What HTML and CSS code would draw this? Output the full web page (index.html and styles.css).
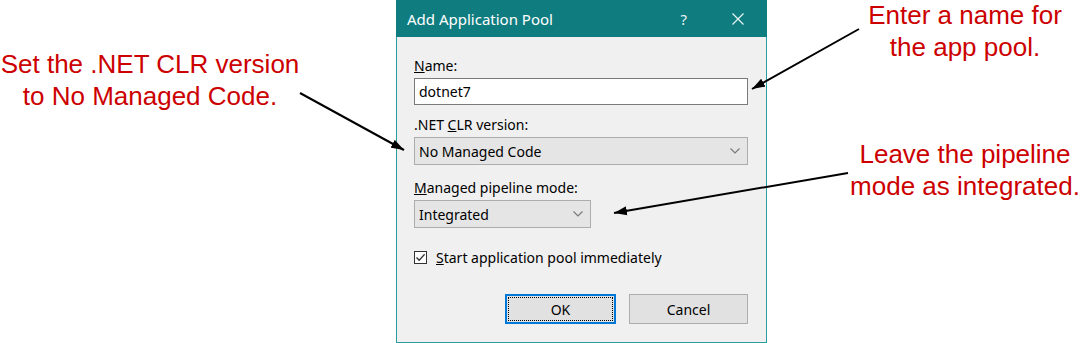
FILE: index.html
```html
<!DOCTYPE html>
<html lang="en">
<head>
  <meta charset="UTF-8">
  <title>Add Application Pool</title>
  <link rel="stylesheet" href="styles.css">
</head>
<body>
  <div class="page">
    <!-- 左側の注釈 -->
    <div class="side side-left">
      <p class="note note-clr">Set the .NET CLR version<br>to No Managed Code.</p>
    </div>

    <!-- ダイアログ本体 -->
    <div class="dialog">
      <div class="titlebar">
        <span class="title">Add Application Pool</span>
        <span class="help">?</span>
        <svg class="close" width="12" height="12" viewBox="0 0 12 12">
          <path d="M0.5 0.5 L11.5 11.5 M11.5 0.5 L0.5 11.5" stroke="#e8f4f4" stroke-width="1.2" fill="none"/>
        </svg>
      </div>
      <div class="content">
        <div class="label"><u>N</u>ame:</div>
        <div class="textbox">dotnet7</div>

        <div class="label">.NET <u>C</u>LR version:</div>
        <div class="select select-wide">
          <span>No Managed Code</span>
          <svg class="chevron" width="10" height="6" viewBox="0 0 10 6"><path d="M0.5 0.5 L5 5 L9.5 0.5" stroke="#7a7a7a" stroke-width="1.2" fill="none"/></svg>
        </div>

        <div class="label"><u>M</u>anaged pipeline mode:</div>
        <div class="select select-narrow">
          <span>Integrated</span>
          <svg class="chevron" width="10" height="6" viewBox="0 0 10 6"><path d="M0.5 0.5 L5 5 L9.5 0.5" stroke="#7a7a7a" stroke-width="1.2" fill="none"/></svg>
        </div>

        <div class="check">
          <span class="checkbox">
            <svg width="11" height="11" viewBox="0 0 11 11"><path d="M1.5 5.5 L4.2 8.3 L9.6 2.3" stroke="#333" stroke-width="1.3" fill="none"/></svg>
          </span>
          <span><u>S</u>tart application pool immediately</span>
        </div>

        <div class="buttons">
          <div class="btn btn-default"><span class="focus">OK</span></div>
          <div class="btn">Cancel</div>
        </div>
      </div>
    </div>

    <!-- 右側の注釈 -->
    <div class="side side-right">
      <p class="note note-name">Enter a name for<br>the app pool.</p>
      <p class="note note-mode">Leave the pipeline<br>mode as integrated.</p>
    </div>

    <!-- 矢印 -->
    <svg class="arrows" width="1083" height="343" viewBox="0 0 1083 343">
      <defs>
        <marker id="head" markerUnits="userSpaceOnUse" markerWidth="14" markerHeight="10" refX="13" refY="5" orient="auto">
          <path d="M0 0.5 L13 5 L0 9.5 Z" fill="#000"/>
        </marker>
      </defs>
      <line x1="859" y1="29" x2="752" y2="89" stroke="#000" stroke-width="2" marker-end="url(#head)"/>
      <line x1="300" y1="93" x2="404" y2="150" stroke="#000" stroke-width="2" marker-end="url(#head)"/>
      <line x1="848" y1="173" x2="614" y2="213" stroke="#000" stroke-width="2" marker-end="url(#head)"/>
    </svg>
  </div>
</body>
</html>
```

FILE: styles.css
```css
html, body {
  margin: 0;
  padding: 0;
  background: #ffffff;
}

.page {
  position: relative;
  display: flex;
  width: 1083px;
  height: 343px;
  overflow: hidden;
}

/* 注釈テキスト */
.side {
  display: flex;
  flex-direction: column;
}
.side-left {
  width: 396px;
}
.side-right {
  width: 316px;
}
.note {
  margin: 0;
  font-family: "Liberation Sans", Arial, sans-serif;
  font-size: 26px;
  line-height: 32px;
  color: #cc0000;
  text-align: center;
  white-space: nowrap;
}
.note-clr {
  width: 300px;
  margin-top: 48px;
}
.note-name {
  width: 240px;
  margin-left: 78px;
  margin-top: -1px;
}
.note-mode {
  width: 240px;
  margin-left: 78px;
  margin-top: 75px;
}

/* ダイアログ */
.dialog {
  width: 371px;
  height: 343px;
  box-sizing: border-box;
  border: 1px solid #2a9d9f;
  border-top: none;
  background: #f0f0f0;
  display: flex;
  flex-direction: column;
  font-family: "Noto Sans", "Open Sans", sans-serif;
  font-size: 14px;
  color: #000000;
}
.titlebar {
  height: 37px;
  background: #0f7c7f;
  display: flex;
  align-items: center;
  padding: 0 23px 0 11px;
  margin: 0 -1px;
  color: #ffffff;
}
.title {
  flex: 1;
  font-size: 15px;
}
.help {
  font-size: 15px;
  margin-right: 45px;
  color: #e8f4f4;
}

.content {
  padding: 20px 18px 0 17px;
  display: flex;
  flex-direction: column;
}
.label {
  line-height: 18px;
  margin-bottom: 3px;
}
.textbox {
  height: 27px;
  box-sizing: border-box;
  border: 1px solid #7a7a7a;
  background: #ffffff;
  padding: 0 4px;
  line-height: 25px;
  margin-bottom: 11px;
}
.select {
  height: 28px;
  box-sizing: border-box;
  border: 1px solid #adadad;
  background: #e5e5e5;
  padding: 0 7px 0 4px;
  display: flex;
  align-items: center;
  justify-content: space-between;
}
.select-wide {
  margin-bottom: 14px;
}
.select-narrow {
  width: 177px;
  margin-bottom: 20px;
}

.check {
  display: flex;
  align-items: center;
  gap: 9px;
  margin-bottom: 27px;
}
.checkbox {
  width: 13px;
  height: 13px;
  box-sizing: border-box;
  border: 1px solid #333333;
  background: #ffffff;
  display: flex;
  align-items: center;
  justify-content: center;
}

.buttons {
  display: flex;
  justify-content: flex-end;
  gap: 13px;
}
.btn {
  width: 119px;
  height: 30px;
  box-sizing: border-box;
  border: 1px solid #adadad;
  background: #e1e1e1;
  display: flex;
  align-items: center;
  justify-content: center;
}
.btn-default {
  width: 111px;
  border: 2px solid #0078d7;
  padding: 1px;
}
.focus {
  flex: 1;
  align-self: stretch;
  display: flex;
  align-items: center;
  justify-content: center;
  border: 1px dotted #000000;
}

/* 矢印のオーバーレイ */
.arrows {
  position: absolute;
  top: 0;
  left: 0;
  pointer-events: none;
}
```
